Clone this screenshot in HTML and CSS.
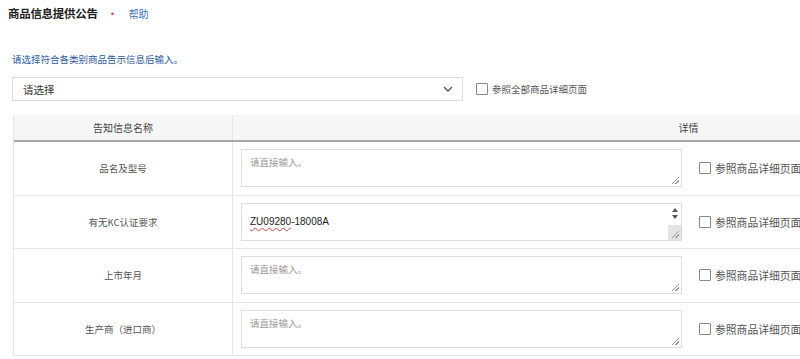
FILE: index.html
```html
<!DOCTYPE html>
<html lang="zh-CN">
<head>
<meta charset="utf-8">
<link rel="stylesheet" href="styles.css">
</head>
<body>
<div class="page">
  <div class="title-row">
    <span class="title">商品信息提供公告</span>
    <span class="req">•</span>
    <a class="help">帮助</a>
  </div>
  <div class="hint">请选择符合各类别商品告示信息后输入。</div>
  <div class="select-row">
    <div class="select">
      <span>请选择</span>
      <svg class="chev" width="10" height="6" viewBox="0 0 10 6"><path d="M1 1 L5 5 L9 1" fill="none" stroke="#555" stroke-width="1.4"/></svg>
    </div>
    <label class="chk"><span class="box"></span><span>参照全部商品详细页面</span></label>
  </div>
  <div class="table">
    <div class="thead">
      <div class="c1">告知信息名称</div>
      <div class="c2">详情</div>
    </div>
    <div class="row">
      <div class="c1">品名及型号</div>
      <div class="c2">
        <div class="ta"><span class="ph">请直接输入。</span><span class="grip"></span></div>
        <label class="chk big"><span class="box"></span><span>参照商品详细页面</span></label>
      </div>
    </div>
    <div class="row">
      <div class="c1">有无KC认证要求</div>
      <div class="c2">
        <div class="ta filled"><span class="val"><span class="typo">ZU09280</span>-18008A</span>
          <span class="sb"><span class="up"></span><span class="dn"></span><span class="track"></span></span>
          <span class="grip"></span></div>
        <label class="chk big"><span class="box"></span><span>参照商品详细页面</span></label>
      </div>
    </div>
    <div class="row">
      <div class="c1">上市年月</div>
      <div class="c2">
        <div class="ta"><span class="ph">请直接输入。</span><span class="grip"></span></div>
        <label class="chk big"><span class="box"></span><span>参照商品详细页面</span></label>
      </div>
    </div>
    <div class="row">
      <div class="c1">生产商（进口商）</div>
      <div class="c2">
        <div class="ta"><span class="ph">请直接输入。</span><span class="grip"></span></div>
        <label class="chk big"><span class="box"></span><span>参照商品详细页面</span></label>
      </div>
    </div>
  </div>
</div>
</body>
</html>
```
FILE: styles.css
```css
html, body {
  margin: 0;
  padding: 0;
  background: #fff;
  overflow: hidden;
}
body {
  font-family: "Noto Sans CJK SC", "Noto Sans", sans-serif;
  color: #444;
  width: 800px;
  height: 359px;
}
.page {
  padding: 3px 0 0 8px;
  width: 1200px;
}
.title-row {
  display: flex;
  align-items: center;
  height: 20px;
}
.title {
  font-size: 11.5px;
  font-weight: bold;
  color: #222;
  letter-spacing: -0.3px;
}
.req {
  color: #e0463a;
  font-size: 12px;
  margin-left: 9px;
}
.help {
  color: #3a6fd0;
  font-size: 10px;
  margin-left: 10px;
}
.hint {
  margin-top: 28px;
  margin-left: 4px;
  font-size: 9.5px;
  color: #2a58a8;
  height: 16px;
  line-height: 16px;
}
.select-row {
  display: flex;
  align-items: center;
  margin-top: 10px;
  margin-left: 4px;
}
.select {
  width: 430px;
  height: 22px;
  border: 1px solid #ddd;
  display: flex;
  align-items: center;
  justify-content: space-between;
  padding: 0 9px 0 10px;
  box-sizing: content-box;
  font-size: 10.5px;
  color: #333;
  margin-right: 13px;
}
.chk {
  display: flex;
  align-items: center;
  font-size: 9.5px;
  color: #555;
  white-space: nowrap;
}
.chk.big {
  font-size: 10.8px;
}
.box {
  width: 10px;
  height: 10px;
  border: 1px solid #888;
  border-radius: 1px;
  margin-right: 4px;
  background: #fff;
  flex: none;
}
.table {
  margin-top: 14px;
  margin-left: 5px;
  width: 1130px;
  border-left: 1px solid #e6e6e6;
}
.thead {
  display: flex;
  height: 25px;
  background: #f6f6f6;
  border-bottom: 2px solid #a8a8a8;
  font-size: 10px;
  color: #444;
}
.thead .c1, .thead .c2 {
  display: flex;
  align-items: center;
  justify-content: center;
}
.c1 {
  width: 218px;
  border-right: 1px solid #e6e6e6;
  flex: none;
}
.c2 {
  flex: 1;
}
.row {
  display: flex;
  border-bottom: 1px solid #e6e6e6;
  height: 52.6px;
}
.row .c1 {
  display: flex;
  align-items: center;
  justify-content: center;
  font-size: 9.5px;
  color: #555;
}
.row .c2 {
  display: flex;
  align-items: center;
  padding-left: 8px;
}
.ta {
  position: relative;
  width: 439px;
  height: 36px;
  border: 1px solid #ddd;
  margin-right: 17px;
  flex: none;
}
.ph {
  position: absolute;
  left: 8px;
  top: 5px;
  font-size: 9.5px;
  color: #999;
}
.val {
  position: absolute;
  left: 8px;
  top: 12px;
  font-size: 10px;
  color: #222;
  font-family: "Liberation Sans", Arial, sans-serif;
}
.typo {
  text-decoration: underline wavy #e04040;
  text-decoration-thickness: 1px;
  text-underline-offset: 2px;
}
.grip {
  position: absolute;
  right: 2px;
  bottom: 2px;
  width: 7px;
  height: 7px;
  background: linear-gradient(135deg, transparent 45%, #999 45%, #999 55%, transparent 55%, transparent 70%, #999 70%, #999 80%, transparent 80%);
}
.sb {
  position: absolute;
  right: 0;
  top: 0;
  width: 13px;
  height: 36px;
  display: flex;
  flex-direction: column;
  align-items: center;
}
.up, .dn {
  width: 0;
  height: 0;
  border-left: 3.5px solid transparent;
  border-right: 3.5px solid transparent;
}
.up {
  margin-top: 4px;
  border-bottom: 4px solid #555;
}
.dn {
  margin-top: 3px;
  border-top: 4px solid #555;
}
.track {
  margin-top: auto;
  width: 13px;
  height: 15px;
  background: #e3e3e3;
}
```
